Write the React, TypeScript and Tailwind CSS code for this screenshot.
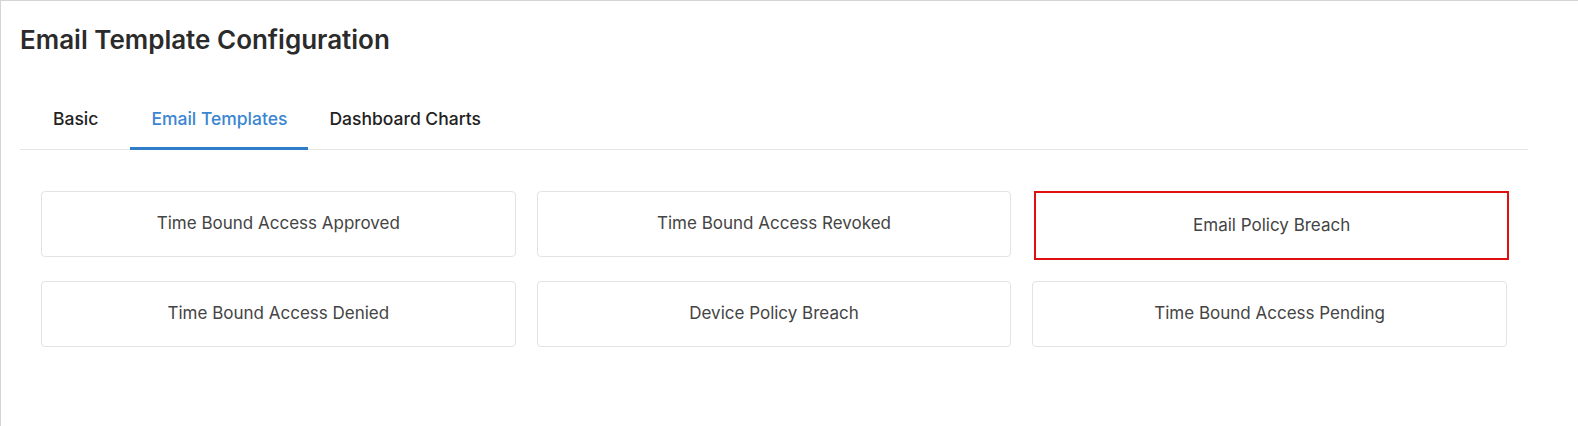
const templates = [
  'Time Bound Access Approved',
  'Time Bound Access Revoked',
  'Email Policy Breach',
  'Time Bound Access Denied',
  'Device Policy Breach',
  'Time Bound Access Pending',
];

const tabs = ['Basic', 'Email Templates', 'Dashboard Charts'];

export default function App() {
  const active = 'Email Templates';
  const selected = 'Email Policy Breach';

  return (
    <div
      className="h-[426px] w-full overflow-hidden bg-white border-l border-t border-[#d4d4d4]"
      style={{ fontFamily: 'Inter, "Noto Sans", sans-serif' }}
    >
      <div className="pl-[19px] pr-[50px]">
        <h1 className="pt-[22px] text-[26px] leading-[34px] font-semibold text-[#2b2b2b]">
          Email Template Configuration
        </h1>

        <div className="mt-[34px] flex border-b border-[#e6e6e6] pl-[12px]">
          {tabs.map((t, i) => {
            const isActive = t === active;
            return (
              <button
                key={t}
                className={`h-[59px] px-[21px] text-[17.5px] font-medium border-b-[3px] -mb-px ${
                  i === 0 ? 'mr-[11px]' : ''
                } ${isActive ? 'text-[#3b86d0] border-[#2f7cc9]' : 'text-[#222] border-transparent'}`}
              >
                {t}
              </button>
            );
          })}
        </div>

        <div className="grid grid-cols-3 gap-x-[21px] gap-y-[21px] px-[21px] pt-[41px]">
          {templates.map((t) => {
            const isSel = t === selected;
            return (
              <div
                key={t}
                className={`flex h-[66px] items-center justify-center text-[17px] text-[#444] ${
                  isSel
                    ? 'border-2 border-[#e01010] translate-x-[2px] h-[69px]'
                    : 'border border-[#e3e3e3] rounded-[4px]'
                }`}
              >
                {t}
              </div>
            );
          })}
        </div>
      </div>
    </div>
  );
}
